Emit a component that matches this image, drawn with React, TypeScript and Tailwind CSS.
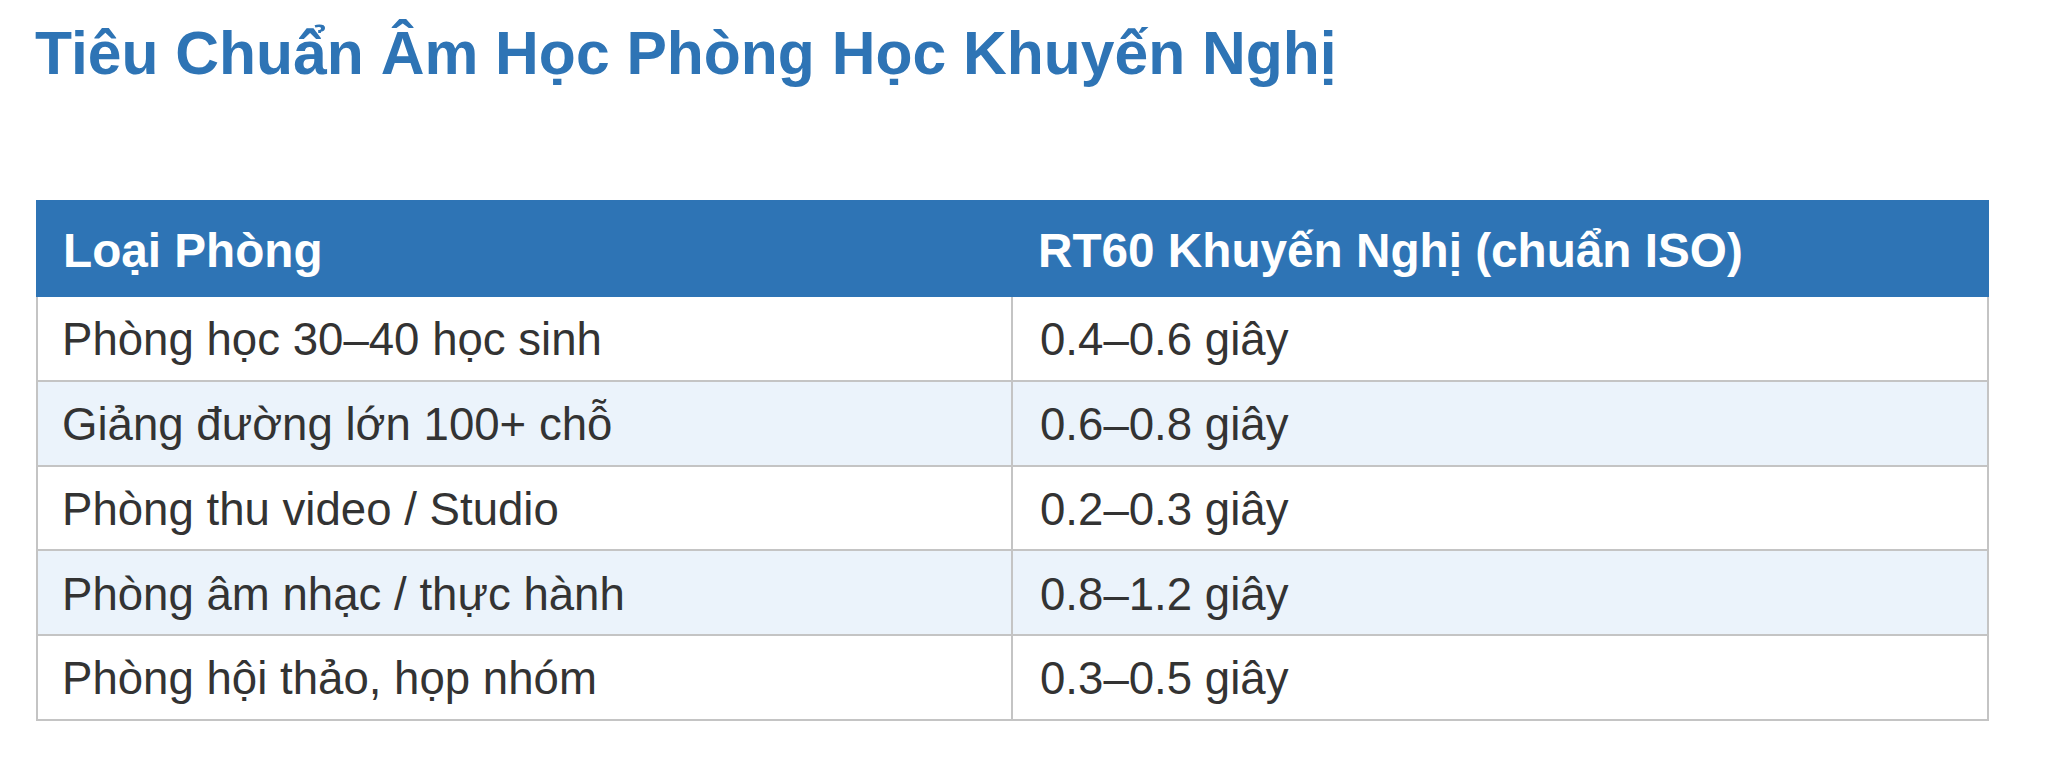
import React from "react";

const rows: [string, string][] = [
  ["Phòng học 30–40 học sinh", "0.4–0.6 giây"],
  ["Giảng đường lớn 100+ chỗ", "0.6–0.8 giây"],
  ["Phòng thu video / Studio", "0.2–0.3 giây"],
  ["Phòng âm nhạc / thực hành", "0.8–1.2 giây"],
  ["Phòng hội thảo, họp nhóm", "0.3–0.5 giây"],
];

export default function App() {
  return (
    <div
      className="w-[2048px] h-[761px] bg-white overflow-hidden"
      style={{ fontFamily: '"Liberation Sans", Arial, sans-serif' }}
    >
      <h1 className="pl-[35px] pt-[23px] text-[60.6px] leading-none font-bold text-[#2e74b5]">
        Tiêu Chuẩn Âm Học Phòng Học Khuyến Nghị
      </h1>
      <div className="ml-[36px] mt-[116px] w-[1953px]">
        <div className="grid grid-cols-[977px_1fr] h-[97px] bg-[#2e74b5] text-white font-bold text-[47.7px]">
          <div className="flex items-center pl-[27px] pt-[6px]">Loại Phòng</div>
          <div className="flex items-center pl-[25px] pt-[6px]">RT60 Khuyến Nghị (chuẩn ISO)</div>
        </div>
        <div className="border-x-2 border-b-2 border-[#c4c4c4] text-[45.6px] text-[#333333]">
          {rows.map(([a, b], i) => (
            <div
              key={i}
              className={
                "grid grid-cols-[975px_1fr] " +
                (i > 0 ? "h-[84.6px] border-t-2 border-[#c4c4c4] " : "h-[83.7px] ") +
                (i % 2 === 1 ? "bg-[#ebf3fb]" : "bg-white")
              }
            >
              <div className="flex items-center pl-[24px] pt-[4px] border-r-2 border-[#c4c4c4]">{a}</div>
              <div className="flex items-center pl-[27px] pt-[4px]">{b}</div>
            </div>
          ))}
        </div>
      </div>
    </div>
  );
}
